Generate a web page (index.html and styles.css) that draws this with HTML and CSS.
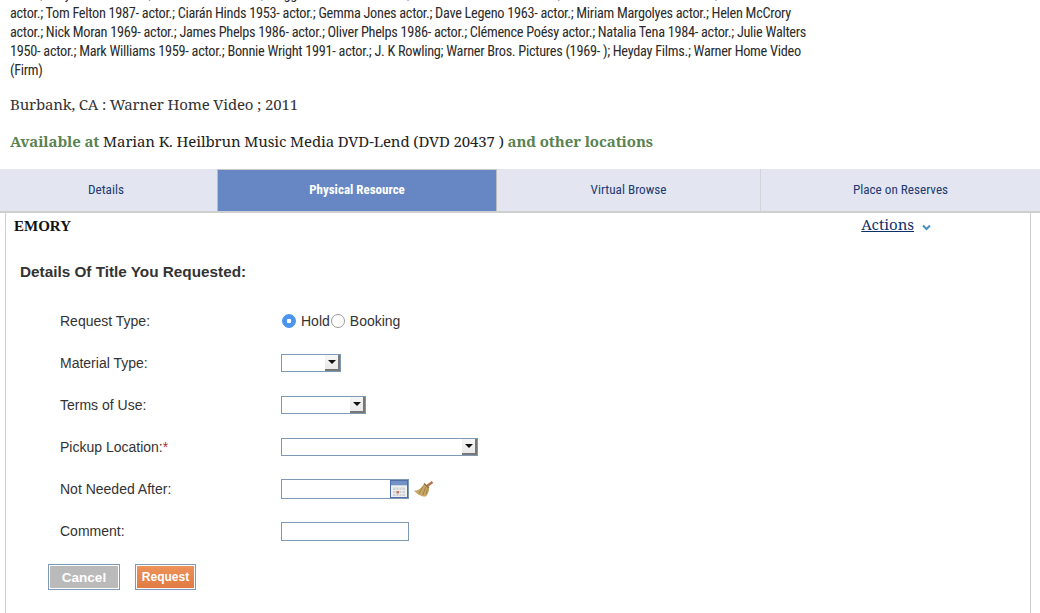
FILE: index.html
```html
<!DOCTYPE html>
<html lang="en">
<head>
<meta charset="utf-8">
<title>Physical Resource</title>
<link rel="stylesheet" href="styles.css">
</head>
<body>
<header class="record">
  <p class="contributors">actor.; Gary Oldman actor.; Alan Rickman actor.; Maggie Smith 1934- actor.; Jim Broadbent 1949- actor.; Robbie Coltrane 1950- actor.; Warwick Davis 1970-<br>actor.; Tom Felton 1987- actor.; Ciarán Hinds 1953- actor.; Gemma Jones actor.; Dave Legeno 1963- actor.; Miriam Margolyes actor.; Helen McCrory<br>actor.; Nick Moran 1969- actor.; James Phelps 1986- actor.; Oliver Phelps 1986- actor.; Clémence Poésy actor.; Natalia Tena 1984- actor.; Julie Walters<br>1950- actor.; Mark Williams 1959- actor.; Bonnie Wright 1991- actor.; J. K Rowling; Warner Bros. Pictures (1969- ); Heyday Films.; Warner Home Video<br>(Firm)</p>
  <p class="publisher">Burbank, CA : Warner Home Video ; 2011</p>
  <p class="availability"><b>Available at</b> Marian K. Heilbrun Music Media DVD-Lend (DVD 20437 ) <b>and other locations</b></p>
</header>
<nav class="tabs">
  <a class="tab tab-details">Details</a>
  <a class="tab tab-physical active">Physical Resource</a>
  <a class="tab tab-virtual">Virtual Browse</a>
  <a class="tab tab-reserves">Place on Reserves</a>
</nav>
<main class="panel">
  <div class="panel-head">
    <h2 class="library">EMORY</h2>
    <div class="actions"><a>Actions</a>
      <svg class="chevron" width="9" height="7" viewBox="0 0 9 7"><path d="M1 1.500l3.500 3.500L8 1.500" fill="none" stroke="#4a8fc4" stroke-width="2"/></svg>
    </div>
  </div>
  <h3 class="form-title">Details Of Title You Requested:</h3>
  <form class="form">
    <div class="row">
      <span class="label">Request Type:</span>
      <div class="radios">
        <span class="radio checked"></span><span class="radio-text">Hold</span><span class="radio"></span><span class="radio-text">Booking</span>
      </div>
    </div>
    <div class="row">
      <span class="label">Material Type:</span>
      <span class="select w60"><span class="arrow"></span></span>
    </div>
    <div class="row">
      <span class="label">Terms of Use:</span>
      <span class="select w85"><span class="arrow"></span></span>
    </div>
    <div class="row">
      <span class="label">Pickup Location:<i class="req">*</i></span>
      <span class="select w197"><span class="arrow"></span></span>
    </div>
    <div class="row">
      <span class="label">Not Needed After:</span>
      <span class="input date">
        <svg class="cal" width="18" height="18" viewBox="0 0 18 18">
          <rect width="18" height="18" fill="#4e6ea8"/>
          <rect x="1" y="1" width="16" height="4" fill="#7092c6"/>
          <rect x="1" y="5" width="16" height="1" fill="#c8d4e6"/>
          <rect x="1" y="6" width="16" height="11" fill="#eef0f0"/>
          <rect x="3" y="7.500" width="12" height="8.500" fill="#cfd1d2"/>
          <path d="M3 10.500h12M3 13.500h12M6 7.500v8.500M9 7.500v8.500M12 7.500v8.500" stroke="#f4f4f4" stroke-width=".8"/>
          <rect x="6.500" y="11" width="2.500" height="2.500" fill="#c9756b"/>
        </svg>
      </span>
      <svg class="broom" width="20" height="17" viewBox="0 0 20 17">
        <path d="M18.500 1L12.500 5.500" stroke="#b5764a" stroke-width="2.500" fill="none"/>
        <path d="M10 2.500l5 4.500c.5 3-1 6-3 8.500C8 16 3 13.500 0 9.500c4 .5 8-2.500 10-7z" fill="#c9a765"/>
        <path d="M11.500 6l-2.500 8M9 5.500l-4 7M13.500 7.500l-1.500 6" stroke="#94773f" stroke-width=".8" fill="none"/>
        <path d="M10 2.500l5 4.500" stroke="#8a6a3a" stroke-width="1.200" fill="none"/>
      </svg>
    </div>
    <div class="row">
      <span class="label">Comment:</span>
      <span class="input comment"></span>
    </div>
    <div class="buttons">
      <button type="button" class="btn cancel">Cancel</button>
      <button type="button" class="btn request">Request</button>
    </div>
  </form>
</main>
</body>
</html>
```
FILE: styles.css
```css
html, body { margin: 0; padding: 0; height: 613px; overflow: hidden; background: #fff; }
body { color: #333; font-family: "Liberation Sans", Arial, sans-serif; }
p, h2, h3 { margin: 0; }

.record { height: 169px; padding-left: 10px; overflow: hidden; box-sizing: border-box; }
.contributors { margin-top: -15px; white-space: nowrap; font: 14.300px/19px "Roboto", sans-serif; font-stretch: 75%; letter-spacing: -.29px; color: #2b2b2b; }
.publisher { margin-top: 14px; font: 15px/20px "Noto Serif", "DejaVu Serif", "Liberation Serif", serif; letter-spacing: -.16px; color: #333; }
.availability { margin-top: 17px; white-space: nowrap; font: 15px/20px "Noto Serif", "DejaVu Serif", "Liberation Serif", serif; letter-spacing: -.11px; color: #222; }
.availability b { color: #5a8350; }

.tabs { display: grid; grid-template-columns: 217px 280px 264px 279px; height: 44px; background: #e3e6f0; border-bottom: 2px solid #cfcfcf; box-sizing: border-box; }
.tab { display: flex; align-items: center; justify-content: center; padding-bottom: 2px; font: 13.200px "Roboto", sans-serif; font-stretch: 75%; color: #1c3a70; }
.tab-details { padding-right: 5px; }
.tab-virtual { border-right: 1px solid #d2d4da; }
.tab.active { background: #6687c4; color: #fff; font-size: 13px; font-weight: 700; border-left: 1px solid #bdbdbd; border-right: 1px solid #bdbdbd; border-top: 1px solid #c8c8c8; }

.panel { margin: 0 9px 0 5px; height: 400px; border-left: 1px solid #cfcfcf; border-right: 1px solid #cfcfcf; box-sizing: border-box; }
.panel-head { display: flex; justify-content: space-between; height: 32px; padding: 3px 99px 0 8px; box-sizing: border-box; }
.library { font: 700 15px/20px "Liberation Serif", serif; color: #111; }
.actions { margin-top: -2px; font: 15px/20px "Noto Serif", "Liberation Serif", serif; color: #0f2f6b; white-space: nowrap; }
.actions a { text-decoration: underline; }
.chevron { margin-left: 4px; vertical-align: -1px; }

.form-title { margin: 18px 0 0 14px; font: 700 15.300px/18px "Liberation Sans", Arial, sans-serif; color: #333; }

.form { margin-top: 19px; padding-left: 54px; }
.row { display: flex; align-items: center; height: 42px; font-size: 14px; }
.label { width: 221px; flex: none; color: #333; }
.req { color: #b02a2a; font-style: normal; }

.radios { display: flex; align-items: center; margin-left: 1px; }
.radio { width: 14px; height: 14px; border: 1px solid #9a9a9a; border-radius: 50%; background: #fff; box-sizing: border-box; }
.radio.checked { background: radial-gradient(circle, #fff 0 2px, #4a94ef 2.600px); border-color: #4a94ef; }
.radio-text { margin-left: 5px; }
.radio-text + .radio { margin-left: 1px; }

.select, .input { display: block; height: 18px; border: 1px solid #7e99b5; box-sizing: border-box; background: #fff; }
.select { display: flex; justify-content: flex-end; }
.w60 { width: 60px; }
.w85 { width: 85px; }
.w197 { width: 197px; }
.arrow { width: 15px; height: 16px; background: linear-gradient(#f6f6f6, #e9e9e9); border-right: 2px solid #777; border-bottom: 2px solid #777; box-sizing: border-box; display: flex; align-items: center; justify-content: center; }
.arrow::after { content: ""; border-left: 4px solid transparent; border-right: 4px solid transparent; border-top: 4px solid #111; }

.input.date { width: 128px; height: 20px; display: flex; justify-content: flex-end; }
.cal { display: block; }
.broom { margin-left: 5px; }
.input.comment { width: 128px; height: 19px; }

.buttons { display: flex; gap: 15px; margin: 12px 0 0 -12px; }
.btn { height: 26px; padding: 0; border: 1px solid #7e99b5; outline: 1px solid #fff; outline-offset: -2px; font: 700 13.500px "Liberation Sans", Arial, sans-serif; color: #fff; }
.cancel { width: 72px; background: #bababa; }
.request { width: 61px; font-size: 12px; background: linear-gradient(#ee9359, #e07a41); }
```
